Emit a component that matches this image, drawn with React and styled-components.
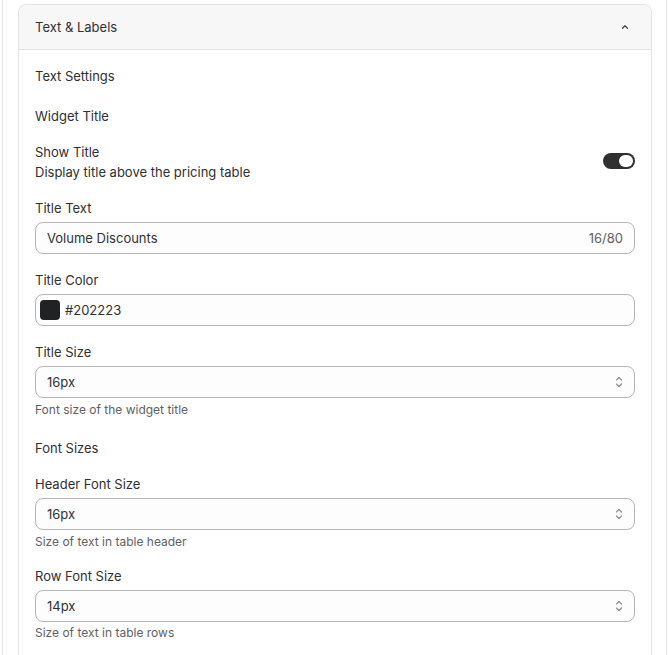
import React from "react";
import styled, { createGlobalStyle } from "styled-components";

const Global = createGlobalStyle`
  html, body { margin: 0; padding: 0; background: #fff; }
  body { font-family: Inter, "Noto Sans", sans-serif; color: #303030; -webkit-font-smoothing: antialiased; }
  * { box-sizing: border-box; }
`;

const Frame = styled.div`
  margin-left: 2px;
  width: 665px;
  min-height: 655px;
  border-left: 1px solid #e6e6e6;
  border-right: 1px solid #e6e6e6;
  padding: 4px 14px 0 15px;
`;

const Card = styled.div`
  border: 1px solid #e3e3e3;
  border-bottom: none;
  border-radius: 8px 8px 0 0;
  overflow: hidden;
  background: #fff;
`;

const Header = styled.div`
  height: 45px;
  display: flex;
  align-items: center;
  justify-content: space-between;
  padding: 0 20px 0 16px;
  background: #f7f7f8;
  border-bottom: 1px solid #e3e3e3;
  font-size: 13px;
  line-height: 20px;
`;

const Body = styled.div`
  padding: 16px 16px 20px;
  display: flex;
  flex-direction: column;
`;

const Heading = styled.div`
  font-size: 13px;
  line-height: 20px;
  margin-top: ${(p) => p.$mt || 0}px;
  margin-bottom: ${(p) => p.$mb}px;
`;

const Field = styled.div`
  display: flex;
  flex-direction: column;
  margin-bottom: 16px;
`;

const Label = styled.div`
  font-size: 13px;
  line-height: 20px;
  margin-bottom: 4px;
`;

const Help = styled.div`
  font-size: 12px;
  line-height: 16px;
  color: #616161;
  margin-top: ${(p) => p.$mt ?? 4}px;
`;

const ToggleRow = styled.div`
  display: flex;
  align-items: center;
  justify-content: space-between;
  margin-bottom: 16px;
`;

const ToggleText = styled.div`
  font-size: 13px;
  line-height: 20px;
`;

const Toggle = styled.div`
  width: 32px;
  height: 16px;
  border-radius: 8px;
  background: #303030;
  position: relative;
  margin-top: -2px;
  &::after {
    content: "";
    position: absolute;
    right: 2px;
    top: 2px;
    width: 14px;
    height: 12px;
    border-radius: 6px;
    background: #fff;
  }
`;

const InputBox = styled.div`
  height: 32px;
  border: 1px solid #b5b5b5;
  border-radius: 8px;
  background: #fdfdfd;
  display: flex;
  align-items: center;
  padding: 0 11px 0 ${(p) => (p.$tight ? 4 : 11)}px;
  font-size: 13px;
  gap: 5px;
`;

const Grow = styled.span`
  flex: 1;
`;

const Counter = styled.span`
  color: #616161;
  font-size: 13px;
`;

const Swatch = styled.span`
  width: 20px;
  height: 20px;
  border-radius: 4px;
  background: #202223;
`;

const Chev = () => (
  <svg width="12" height="12" viewBox="0 0 12 12" fill="none">
    <path d="M3.5 7.2 L6 4.7 L8.5 7.2" stroke="#4a4a4a" strokeWidth="1.3" strokeLinecap="round" strokeLinejoin="round" />
  </svg>
);

const UpDown = () => (
  <svg width="8" height="16" viewBox="0 0 8 16" fill="none">
    <path d="M1.5 6 L4 3.5 L6.5 6 M1.5 10 L4 12.5 L6.5 10" stroke="#8a8a8a" strokeWidth="1.1" strokeLinecap="round" strokeLinejoin="round" />
  </svg>
);

const Select = ({ value }) => (
  <InputBox>
    <Grow>{value}</Grow>
    <UpDown />
  </InputBox>
);

export default function App() {
  return (
    <>
      <Global />
      <Frame>
        <Card>
          <Header>
            <span>Text &amp; Labels</span>
            <Chev />
          </Header>
          <Body>
            <Heading $mb={20}>Text Settings</Heading>
            <Heading $mb={16}>Widget Title</Heading>
            <ToggleRow>
              <ToggleText>
                <div>Show Title</div>
                <div>Display title above the pricing table</div>
              </ToggleText>
              <Toggle />
            </ToggleRow>
            <Field>
              <Label>Title Text</Label>
              <InputBox>
                <Grow>Volume Discounts</Grow>
                <Counter>16/80</Counter>
              </InputBox>
            </Field>
            <Field>
              <Label>Title Color</Label>
              <InputBox $tight>
                <Swatch />
                <Grow>#202223</Grow>
              </InputBox>
            </Field>
            <Field>
              <Label>Title Size</Label>
              <Select value="16px" />
              <Help>Font size of the widget title</Help>
            </Field>
            <Heading $mt={4} $mb={16}>Font Sizes</Heading>
            <Field>
              <Label>Header Font Size</Label>
              <Select value="16px" />
              <Help>Size of text in table header</Help>
            </Field>
            <Field>
              <Label>Row Font Size</Label>
              <Select value="14px" />
              <Help $mt={3}>Size of text in table rows</Help>
            </Field>
          </Body>
        </Card>
      </Frame>
    </>
  );
}
